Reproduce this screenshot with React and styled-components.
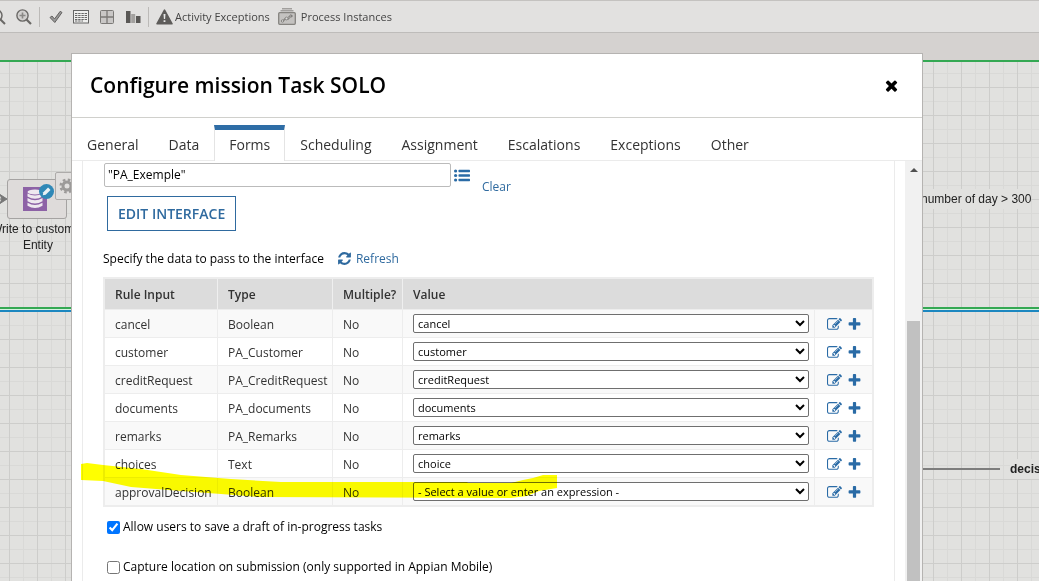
import React, { useState } from "react";
import styled, { createGlobalStyle, css } from "styled-components";

const GlobalStyle = createGlobalStyle`
  * {
    box-sizing: border-box;
  }

  body {
    margin: 0;
    font-family: "Open Sans", "Noto Sans", sans-serif;
    font-size: 12px;
    color: #333;
  }
`;

const Page = styled.div`
  display: flex;
  flex-direction: column;
  position: relative;
  height: 100vh;
  overflow: hidden;
  background: #d5d2d0;
`;

const Toolbar = styled.header`
  display: flex;
  align-items: center;
  height: 33px;
  flex: none;
  border-top: 1px solid #c4c2c0;
  border-bottom: 1px solid #bebcba;
  background: #e2e1e0;
`;

const ToolButton = styled.button`
  display: flex;
  align-items: center;
  gap: ${({ $gap }) => $gap || 0}px;
  margin: 0 0 0 ${({ $space }) => $space || 0}px;
  padding: 0;
  border: none;
  background: none;
  font-family: inherit;
  font-size: 11px;
  color: #444;
  cursor: pointer;

  svg {
    display: block;
  }
`;

const Separator = styled.span`
  width: 1px;
  height: 20px;
  margin: 0 7px;
  background: #bcbab8;
`;

const Canvas = styled.main`
  position: relative;
  flex: 1;
  margin-top: 27px;
  border-top: 2px solid #34a853;
  overflow: hidden;
  background-color: #e1e1df;
  background-image: linear-gradient(90deg, #cdcdcb 1px, transparent 1px),
    linear-gradient(#cdcdcb 1px, transparent 1px),
    linear-gradient(90deg, #d9d9d7 1px, transparent 1px),
    linear-gradient(#d9d9d7 1px, transparent 1px);
  background-size: 28px 28px;
  background-position: 9px 25px, 9px 25px, 23px 11px, 23px 11px;
`;

const LaneBorder = styled.div`
  position: absolute;
  top: 245px;
  left: 0;
  right: 0;
  height: 5px;
  border-top: 2px solid #34a853;
  border-bottom: 2px solid #1c87c0;
  background: #d5f3e0;
`;

const Connector = styled.div`
  position: absolute;
  left: 900px;
  top: 406px;
  width: 100px;
  height: 2px;
  background: #7d7d7d;
`;

const CanvasLabel = styled.div`
  position: absolute;
  left: ${({ $x }) => $x}px;
  top: ${({ $y }) => $y}px;
  padding: 2px 0;
  font-family: "Liberation Sans", Arial, sans-serif;
  line-height: 16px;
  font-weight: ${({ $bold }) => ($bold ? 700 : 400)};
  text-align: center;
  white-space: nowrap;
  color: #222;
  background: ${({ $filled }) => ($filled ? "#e1e1df" : "none")};
`;

const Arrow = styled.svg`
  position: absolute;
  left: 0;
  top: 130px;
`;

const TaskNode = styled.div`
  position: absolute;
  left: 7px;
  top: 117px;
  display: flex;
  align-items: center;
  justify-content: center;
  width: 60px;
  height: 40px;
  border: 1px solid #a5a3a2;
  border-radius: 3px;
  background: #dedbda;
`;

const NodeSettings = styled.div`
  position: absolute;
  left: 55px;
  top: 110px;
  display: flex;
  align-items: center;
  width: 30px;
  height: 28px;
  padding-left: 3px;
  border: 1px solid #adabaa;
  border-radius: 2px;
  background: #e1dfde;
`;

const Overlay = styled.div`
  position: absolute;
  inset: 0;
  display: flex;
  padding: 53px 116px 0 71px;
`;

const Dialog = styled.section`
  display: flex;
  flex: 1;
  flex-direction: column;
  min-width: 0;
  border: 1px solid #b5b3b1;
  border-bottom: none;
  background: #fff;
`;

const DialogHeader = styled.div`
  display: flex;
  align-items: center;
  justify-content: space-between;
  flex: none;
  height: 64px;
  padding: 0 22px 0 18px;
  border-bottom: 1px solid #d0d0cc;
`;

const Title = styled.h1`
  margin: 0;
  padding-bottom: 2px;
  font-size: 21px;
  font-weight: 600;
  line-height: 28px;
  color: #000;
`;

const IconButton = styled.button`
  display: flex;
  padding: 0;
  border: none;
  background: none;
  color: ${({ $dark }) => ($dark ? "#000" : "#2a6ba6")};
  cursor: pointer;
`;

const Tabs = styled.nav`
  display: flex;
  flex: none;
  height: 43px;
  padding-top: 7px;
  border-bottom: 1px solid #ebebeb;
`;

const Tab = styled.button`
  height: 36px;
  margin: 0;
  padding: 4px 14px 2px;
  border: 1px solid transparent;
  border-bottom: none;
  background: none;
  font-family: inherit;
  font-size: 14px;
  line-height: 20px;
  color: #333;
  cursor: pointer;

  ${({ $active }) =>
    $active &&
    css`
      padding-top: 0;
      border-color: #e4e4e4;
      border-top: 5px solid #2e6da6;
      background: #fff;
    `}
`;

const DialogBody = styled.div`
  display: flex;
  flex: 1;
  min-height: 0;
`;

const Panel = styled.div`
  position: relative;
  flex: 1;
  min-width: 0;
  margin: 0 10px;
  padding: 2px 20px 0;
  border: 1px solid #ebebeb;
  border-width: 0 1px;
`;

const Scrollbar = styled.div`
  display: flex;
  flex-direction: column;
  align-items: center;
  width: 17px;
  padding-top: 7px;
  background: #f1f1f1;
`;

const ScrollArrow = styled.span`
  border: 4px solid transparent;
  border-top: none;
  border-bottom: 4px solid #505050;
`;

const ScrollThumb = styled.span`
  width: 13px;
  flex: 1;
  margin-top: 149px;
  background: #c1c1c1;
`;

const InterfaceRow = styled.div`
  display: flex;
  align-items: center;
  height: 24px;
  gap: 3px;
  padding-left: 1px;
`;

const InterfaceInput = styled.input`
  width: 347px;
  height: 24px;
  padding: 0 3px 1px;
  border: 1px solid #bbb;
  border-radius: 2px;
  font: inherit;
  color: #000;
`;

const TextLink = styled.a`
  display: inline-flex;
  align-items: center;
  gap: 4px;
  color: #2f6a9f;
  text-decoration: none;
`;

const ClearLink = styled(TextLink)`
  align-self: flex-start;
  margin: 15px 0 0 9px;
`;

const EditButton = styled.button`
  display: block;
  height: 35px;
  margin: 9px 0 0 4px;
  padding: 0 10px;
  border: 1px solid #2f6a9f;
  background: #fff;
  font-family: inherit;
  font-size: 14px;
  font-weight: 600;
  color: #2f6a9f;
  cursor: pointer;
`;

const Hint = styled.div`
  display: flex;
  align-items: center;
  gap: 13px;
  height: 20px;
  margin: 17px 0 9px;
  color: #000;
`;

const RulesTable = styled.table`
  width: 100%;
  table-layout: fixed;
  border-collapse: separate;
  border-spacing: 0;
  border: 2px solid #ededed;
`;

const Column = styled.col`
  width: ${({ $width }) => ($width ? `${$width}px` : "auto")};
`;

const HeadCell = styled.th`
  height: 30px;
  padding: 0 0 0 10px;
  border-right: ${({ $last }) => ($last ? "none" : "1px solid #efefef")};
  background: #dcdcdc;
  font-weight: 600;
  text-align: left;
  white-space: nowrap;
`;

const Row = styled.tr`
  background: ${({ $odd }) => ($odd ? "#f9f9f9" : "#fff")};
`;

const Cell = styled.td`
  height: 28px;
  padding: 1px 0 0 10px;
  border-top: 1px solid #ededed;
  border-right: 1px solid #ededed;
  white-space: nowrap;

  &:last-child {
    padding-left: 12px;
    border-right: none;
  }
`;

const ValueCell = styled(Cell)`
  padding-top: 0;
`;

const ValueSelect = styled.select`
  display: block;
  width: calc(100% - 5px);
  height: 19px;
  padding: 0;
  border: 1px solid #6f6f6f;
  border-radius: 2px;
  background: #fff;
  font-family: inherit;
  font-size: 11px;
  color: #000;
`;

const Actions = styled.div`
  display: flex;
  align-items: center;
  gap: 5px;
`;

const Option = styled.label`
  display: flex;
  align-items: center;
  gap: 3px;
  height: 40px;
  padding-left: 4px;
  color: #000;

  input {
    width: 13px;
    height: 13px;
    margin: 2px 0 0;
  }
`;

const Options = styled.div`
  margin-top: -1px;
`;

const Marker = styled.svg`
  position: absolute;
  left: -2px;
  top: 301px;
  mix-blend-mode: multiply;
  pointer-events: none;
`;

const glyphs = {
  edit: "M888 1184l116-116-152-152-116 116v56h96v96h56zm440-720q-16-16-33 1l-350 350q-17 17-1 33t33-1l350-350q17-17 1-33zm80 594v190q0 119-84.5 203.5t-203.5 84.5h-832q-119 0-203.5-84.5t-84.5-203.5v-832q0-119 84.5-203.5t203.5-84.5h832q63 0 117 25 15 7 18 23 3 17-9 29l-49 49q-14 14-32 8-23-6-45-6h-832q-66 0-113 47t-47 113v832q0 66 47 113t113 47h832q66 0 113-47t47-113v-126q0-13 9-22l64-64q15-15 35-7t20 29zm-96-738l288 288-672 672h-288v-288zm444 132l-92 92-288-288 92-92q28-28 68-28t68 28l152 152q28 28 28 68t-28 68z",
  plus: "M1600 736v192q0 40-28 68t-68 28h-416v416q0 40-28 68t-68 28h-192q-40 0-68-28t-28-68v-416h-416q-40 0-68-28t-28-68v-192q0-40 28-68t68-28h416v-416q0-40 28-68t68-28h192q40 0 68 28t28 68v416h416q40 0 68 28t28 68z",
  refresh:
    "M1639 1056q0 5-1 7-64 268-268 434.5t-478 166.5q-146 0-282.5-55t-243.5-157l-129 129q-19 19-45 19t-45-19-19-45v-448q0-26 19-45t45-19h448q26 0 45 19t19 45-19 45l-137 137q71 66 161 102t187 36q134 0 250-65t186-179q11-17 53-117 8-23 30-23h192q13 0 22.5 9.5t9.5 22.5zm25-800v448q0 26-19 45t-45 19h-448q-26 0-45-19t-19-45 19-45l138-138q-148-137-349-137-134 0-250 65t-186 179q-11 17-53 117-8 23-30 23h-199q-13 0-22.5-9.5t-9.5-22.5v-7q65-268 270-434.5t480-166.5q146 0 284 55.5t245 156.5l130-129q19-19 45-19t45 19 19 45z",
  close:
    "M1490 1322q0 40-28 68l-136 136q-28 28-68 28t-68-28l-294-294-294 294q-28 28-68 28t-68-28l-136-136q-28-28-28-68t28-68l294-294-294-294q-28-28-28-68t28-68l136-136q28-28 68-28t68 28l294 294 294-294q28-28 68-28t68 28l136 136q28 28 28 68t-28 68l-294 294 294 294q28 28 28 68z",
};

const Glyph = ({ name, size }) => (
  <svg width={size} height={size} viewBox="0 0 1792 1792" fill="currentColor">
    <path d={glyphs[name]} />
  </svg>
);

const ListIcon = () => (
  <svg width="16" height="13" viewBox="0 0 16 13" fill="currentColor">
    <circle cx="1.6" cy="2" r="1.6" />
    <circle cx="1.6" cy="6.5" r="1.6" />
    <circle cx="1.6" cy="11" r="1.6" />
    <rect x="4.5" y="0.8" width="11.5" height="2.4" rx="0.6" />
    <rect x="4.5" y="5.3" width="11.5" height="2.4" rx="0.6" />
    <rect x="4.5" y="9.8" width="11.5" height="2.4" rx="0.6" />
  </svg>
);

const ZoomOutIcon = () => (
  <svg width="6" height="16" viewBox="10 0 6 16" fill="none" stroke="#6a6866">
    <circle cx="6.5" cy="6.5" r="5.5" strokeWidth="1.5" />
    <path d="M10.5 10.5L15 15" strokeWidth="2" />
  </svg>
);

const ZoomInIcon = () => (
  <svg width="16" height="16" viewBox="0 0 16 16" fill="none" stroke="#6a6866">
    <circle cx="6.5" cy="6.5" r="5.6" strokeWidth="1.4" fill="#d2d0cf" />
    <path d="M3.5 6.5h6M6.5 3.5v6" strokeWidth="1.6" stroke="#8a8886" />
    <path d="M10.5 10.5L15 15" strokeWidth="2.2" />
  </svg>
);

const CheckIcon = () => (
  <svg width="14" height="14" viewBox="0 0 14 14">
    <path
      d="M1 7.5L3 6l2.5 3L11.2 1.3l1.8 1.2L5.8 12.5z"
      fill="#999"
      stroke="#636160"
    />
  </svg>
);

const NotesIcon = () => (
  <svg width="16" height="14" viewBox="0 0 16 14" fill="none" stroke="#666">
    <rect x="0.5" y="0.5" width="15" height="12.5" fill="#efefee" />
    <path
      d="M2 3.5h12M2 5.5h12M2 7.5h12M2 9.5h12M2 11h8"
      strokeDasharray="2.4 0.8"
    />
  </svg>
);

const GridIcon = () => (
  <svg width="14" height="14" viewBox="0 0 14 14">
    <rect x="0.5" y="0.5" width="13" height="13" rx="1" fill="#c9c7c6" stroke="#7b7977" />
    <path d="M7 0v14M0 7h14" stroke="#7b7977" strokeWidth="1.3" />
  </svg>
);

const BarsIcon = () => (
  <svg width="15" height="12" viewBox="0 0 15 12">
    <path d="M0 0h4.5v12H0zM10 5h4.5v7H10z" fill="#5a5856" />
    <path d="M5.2 3h4v9h-4z" fill="#a3a19f" />
  </svg>
);

const WarningIcon = () => (
  <svg width="17" height="16" viewBox="0 0 17 16">
    <path
      d="M8.5 1.2L16 14.8H1z"
      fill="#5e5c5a"
      stroke="#5e5c5a"
      strokeWidth="1.6"
      strokeLinejoin="round"
    />
    <path d="M7.5 5h2l-.4 5h-1.2zM7.6 11.2h1.8v1.8H7.6z" fill="#e8e8e8" />
  </svg>
);

const ProcessIcon = () => (
  <svg width="18" height="17" viewBox="0 0 18 17" fill="none" stroke="#85837f">
    <path d="M4 .8h10M2.5 2.8h13" stroke="#a19f9d" strokeWidth="1.4" />
    <rect x="0.7" y="4.7" width="16.6" height="11.6" rx="1" fill="#c4c2c0" strokeWidth="1.3" />
    <path d="M3 13h3v-2h5V8h3M12.5 6.5L14.5 8l-2 1.5" stroke="#777573" />
    <circle cx="4.5" cy="13" r="1.2" fill="#ddd" />
    <circle cx="8.5" cy="10.5" r="1.4" fill="#ddd" />
  </svg>
);

const DatabaseIcon = () => (
  <svg width="38" height="32" viewBox="0 0 38 32">
    <rect x="5" y="4" width="24" height="24" fill="#8d62a6" />
    <g fill="#eee9ef">
      <ellipse cx="17" cy="9" rx="7.5" ry="2.6" />
      <path d="M9.5 10.5q7.5 4 15 0v3q-7.5 4.5-15 0zM9.5 15q7.5 4.5 15 0v3.2q-7.5 4.5-15 0zM9.5 19.8q7.5 4.5 15 0v3q-7.5 4.5-15 0z" />
    </g>
    <circle cx="28.5" cy="8.5" r="7.5" fill="#2f88b7" />
    <path d="M24.8 12.3l.5-3 4.8-4.8 2.4 2.4-4.8 4.8z" fill="#e8f1f5" />
  </svg>
);

const GearIcon = () => (
  <svg width="16" height="16" viewBox="0 0 16 16" fill="none" stroke="#9c9a99">
    <circle cx="8" cy="8" r="4" strokeWidth="3" />
    <circle cx="8" cy="8" r="6.4" strokeWidth="2.4" strokeDasharray="2.6 2.43" />
  </svg>
);

const tabs = [
  "General",
  "Data",
  "Forms",
  "Scheduling",
  "Assignment",
  "Escalations",
  "Exceptions",
  "Other",
];

const rules = [
  { name: "cancel", type: "Boolean", value: "cancel" },
  { name: "customer", type: "PA_Customer", value: "customer" },
  { name: "creditRequest", type: "PA_CreditRequest", value: "creditRequest" },
  { name: "documents", type: "PA_documents", value: "documents" },
  { name: "remarks", type: "PA_Remarks", value: "remarks" },
  { name: "choices", type: "Text", value: "choice" },
  {
    name: "approvalDecision",
    type: "Boolean",
    value: "- Select a value or enter an expression -",
  },
];

const ProcessCanvas = () => (
  <Canvas>
    <LaneBorder />
    <Arrow width="8" height="14" viewBox="0 0 8 14">
      <path d="M0 7h3M0 2.5L7 7l-7 4.5L2 7z" fill="#777" stroke="#777" />
    </Arrow>
    <TaskNode>
      <DatabaseIcon />
    </TaskNode>
    <NodeSettings>
      <GearIcon />
    </NodeSettings>
    <CanvasLabel $x={-9} $y={157}>
      Write to customer
      <br />
      Entity
    </CanvasLabel>
    <CanvasLabel $x={921} $y={127} $filled>
      number of day &gt; 300
    </CanvasLabel>
    <Connector />
    <CanvasLabel $x={1010} $y={397} $filled $bold>
      decision
    </CanvasLabel>
  </Canvas>
);

const FormsPanel = () => {
  const [interfaceName, setInterfaceName] = useState('"PA_Exemple"');
  const [saveDraft, setSaveDraft] = useState(true);
  const [captureLocation, setCaptureLocation] = useState(false);

  return (
    <Panel>
      <InterfaceRow>
        <InterfaceInput
          type="text"
          aria-label="Interface"
          value={interfaceName}
          onChange={(e) => setInterfaceName(e.target.value)}
        />
        <IconButton type="button" aria-label="Browse interfaces">
          <ListIcon />
        </IconButton>
        <ClearLink href="#clear">Clear</ClearLink>
      </InterfaceRow>
      <EditButton type="button">EDIT INTERFACE</EditButton>
      <Hint>
        Specify the data to pass to the interface
        <TextLink href="#refresh">
          <Glyph name="refresh" size={15} />
          Refresh
        </TextLink>
      </Hint>
      <RulesTable>
        <colgroup>
          <Column $width={113} />
          <Column $width={115} />
          <Column $width={70} />
          <Column />
          <Column $width={57} />
        </colgroup>
        <thead>
          <tr>
            <HeadCell>Rule Input</HeadCell>
            <HeadCell>Type</HeadCell>
            <HeadCell>Multiple?</HeadCell>
            <HeadCell colSpan={2} $last>
              Value
            </HeadCell>
          </tr>
        </thead>
        <tbody>
          {rules.map((rule, index) => (
            <Row key={rule.name} $odd={index % 2 === 0}>
              <Cell>{rule.name}</Cell>
              <Cell>{rule.type}</Cell>
              <Cell>No</Cell>
              <ValueCell>
                <ValueSelect aria-label={`Value for ${rule.name}`}>
                  <option>{rule.value}</option>
                </ValueSelect>
              </ValueCell>
              <Cell>
                <Actions>
                  <IconButton type="button" aria-label={`Edit ${rule.name}`}>
                    <Glyph name="edit" size={15} />
                  </IconButton>
                  <IconButton type="button" aria-label={`Add ${rule.name}`}>
                    <Glyph name="plus" size={15} />
                  </IconButton>
                </Actions>
              </Cell>
            </Row>
          ))}
        </tbody>
      </RulesTable>
      <Options>
        <Option>
          <input
            type="checkbox"
            checked={saveDraft}
            onChange={(e) => setSaveDraft(e.target.checked)}
          />
          Allow users to save a draft of in-progress tasks
        </Option>
        <Option>
          <input
            type="checkbox"
            checked={captureLocation}
            onChange={(e) => setCaptureLocation(e.target.checked)}
          />
          Capture location on submission (only supported in Appian Mobile)
        </Option>
      </Options>
      <Marker width="478" height="40" viewBox="0 0 478 40">
        <path
          d="M0 2L6 1 22 3 60 7 100 13 150 17 200 20H386L387 21H430L442 18 452 16 462 13H476V26L458 29 446 34 430 36 178 35 140 32 100 29 50 25 22 19 0 18z"
          fill="#ffff00"
        />
      </Marker>
    </Panel>
  );
};

const App = () => {
  const [activeTab, setActiveTab] = useState("Forms");

  return (
    <Page>
      <GlobalStyle />
      <Toolbar>
        <ToolButton aria-label="Zoom out">
          <ZoomOutIcon />
        </ToolButton>
        <ToolButton aria-label="Zoom in" $space={10}>
          <ZoomInIcon />
        </ToolButton>
        <Separator />
        <ToolButton aria-label="Validate" $space={2}>
          <CheckIcon />
        </ToolButton>
        <ToolButton aria-label="Notes" $space={10}>
          <NotesIcon />
        </ToolButton>
        <ToolButton aria-label="Grid" $space={11}>
          <GridIcon />
        </ToolButton>
        <ToolButton aria-label="Statistics" $space={12}>
          <BarsIcon />
        </ToolButton>
        <Separator />
        <ToolButton $gap={2}>
          <WarningIcon />
          Activity Exceptions
        </ToolButton>
        <ToolButton $gap={5} $space={8}>
          <ProcessIcon />
          Process Instances
        </ToolButton>
      </Toolbar>
      <ProcessCanvas />
      <Overlay>
        <Dialog role="dialog" aria-label="Configure mission Task SOLO">
          <DialogHeader>
            <Title>Configure mission Task SOLO</Title>
            <IconButton type="button" aria-label="Close" $dark>
              <Glyph name="close" size={17} />
            </IconButton>
          </DialogHeader>
          <Tabs>
            {tabs.map((tab) => (
              <Tab
                key={tab}
                type="button"
                $active={tab === activeTab}
                onClick={() => setActiveTab(tab)}
              >
                {tab}
              </Tab>
            ))}
          </Tabs>
          <DialogBody>
            <FormsPanel />
            <Scrollbar>
              <ScrollArrow />
              <ScrollThumb />
            </Scrollbar>
          </DialogBody>
        </Dialog>
      </Overlay>
    </Page>
  );
};

export default App;
